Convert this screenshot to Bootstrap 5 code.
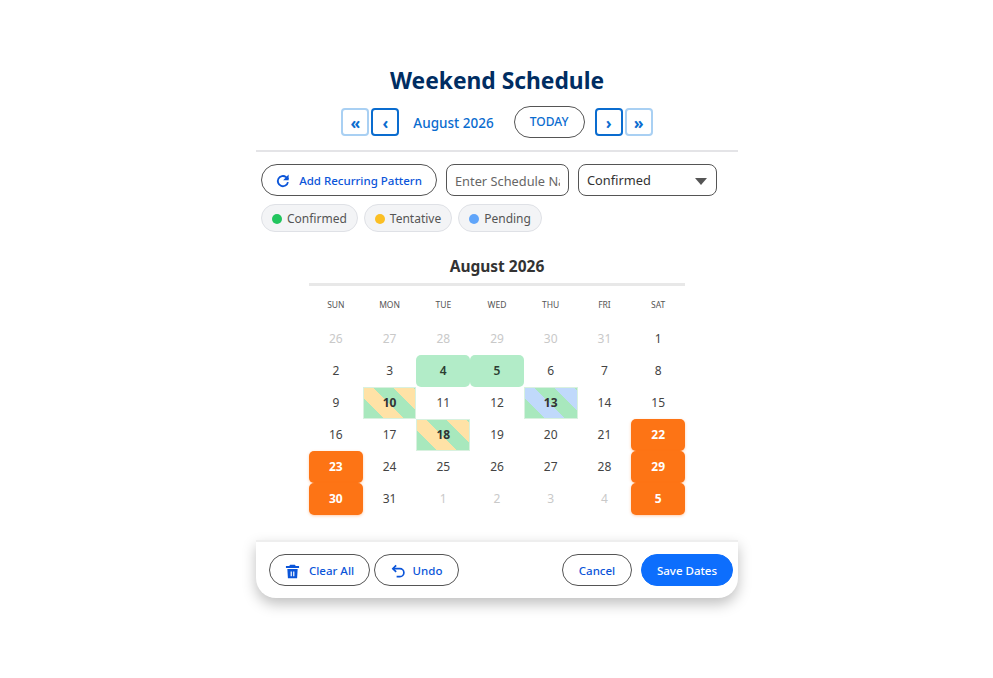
<!DOCTYPE html>
<html lang="en"><head><meta charset="utf-8"><title>Weekend Schedule</title>
<link href="https://cdn.jsdelivr.net/npm/bootstrap@5.3.0/dist/css/bootstrap.min.css" rel="stylesheet">
<style>
body{font-family:"Noto Sans","Open Sans",sans-serif;background:#fff;margin:0;min-height:678px}
.sched-wrap{width:482px;margin:0 0 0 256px;padding-top:64px}
.sched-title{font-size:22.8px;font-weight:700;color:#002d62;line-height:34px;margin:0 0 6px;text-align:center}
.nav-row{height:36px}
.sq-btn{width:28px;height:28px;padding:1px 0 0;border:2px solid #0a6ccf;border-radius:4px;background:#fff;color:#0a6ccf;font-weight:700;font-size:16px;line-height:20px;display:flex;align-items:center;justify-content:center}
.sq-btn.faint{border-color:#a9d0f3}
.gap-l{margin-left:2px}
.month-lbl{color:#0a6ccf;font-size:13.5px;font-weight:500;margin:0 20px 0 14px;padding-top:2px}
.pill-btn{border:1px solid #555;border-radius:17px;background:#fff;color:#0b55d9;font-size:11.5px;font-weight:500;height:32px;padding:1px 16px 0;display:inline-flex;align-items:center;white-space:nowrap}
.today-btn{color:#0a6ccf;margin-right:10px;width:71px;justify-content:center;padding:0;font-size:12px;font-weight:500}
.rule{height:2px;background:#e4e4e7;margin-top:10px}
.tools{margin:12px 0 0 5px;gap:9px}
.rec-btn{width:176px;justify-content:center;gap:9px;padding:1px 0 0}
.name-in{width:123px;height:32px;border:1px solid #555;border-radius:8px;padding:1px 8px 0;font-size:12.8px;color:#555;background:#fff;outline:0;font-family:inherit}
.name-in::placeholder{color:#666;opacity:1}
.kind-sel{width:139px;height:32px;border:1px solid #555;border-radius:8px;padding:2px 8px 0;font-size:12.8px;color:#333;background:#fff;position:relative;display:flex;align-items:center}
.kind-sel::after{content:"";position:absolute;right:9px;top:13px;border-left:6px solid transparent;border-right:6px solid transparent;border-top:7px solid #555}
.chips{margin:8px 0 0 5px;gap:6px}
.chip-item{height:28px;border:1px solid #dfe1e6;border-radius:14px;background:#f3f4f6;color:#555;font-size:12px;display:inline-flex;align-items:center;gap:5px;padding:1px 10px 0}
.dot-mark{width:10px;height:10px;border-radius:50%}
.cal-box{width:376px;margin:23px 0 0 53px}
.cal-title{font-size:15.5px;font-weight:700;color:#333;text-align:center;line-height:22px;padding-bottom:6px;border-bottom:3px solid #e8e8e8}
.cal-grid{display:grid;grid-template-columns:repeat(7,1fr);grid-auto-rows:32px;text-align:center;font-size:12px;color:#444}
.dow{font-size:8.5px;color:#555;height:37px;line-height:37px;text-transform:uppercase}
.hdr-grid{grid-auto-rows:37px}
.day-cell{display:flex;align-items:center;justify-content:center;height:32px}
.muted-day{color:#c9c9c9}
.ok-day{background:#b2ecc8;border-radius:5px;font-weight:600;color:#2c3e33}
.mix-a,.mix-b{font-weight:700;color:#333;border:1px solid #d8f1df}
.mix-a{background:repeating-linear-gradient(45deg,#a8e8bd 0 14px,#ffe2a6 14px 28px)}
.mix-b{background:repeating-linear-gradient(45deg,#a8e8bd 0 14px,#c0d9fb 14px 28px)}
.wk-day{background:#fd7415;color:#fff;font-weight:700;border-radius:5px;box-shadow:0 1px 3px rgba(253,116,21,.35)}
.foot-bar{margin-top:25px;height:58px;border-top:2px solid #eee;border-radius:0 0 20px 20px;box-shadow:0 6px 14px rgba(0,0,0,.25);background:#fff;padding:12px 5px 0 13px;display:flex;align-items:flex-start}
.foot-bar .pill-btn{gap:9px;justify-content:center;padding:2px 0 0}
.foot-bar .wd-85{gap:7px}
.save-btn{background:#0d6efd;border-color:#0d6efd!important;color:#fff!important}
.wd-101{width:101px}.wd-85{width:85px;margin-left:4px}.wd-70{width:70px}.wd-92{width:92px;margin-left:9px}
</style></head><body>
<main class="sched-wrap">
<h1 class="sched-title">Weekend Schedule</h1>
<div class="d-flex justify-content-center align-items-center nav-row">
<button class="sq-btn faint">«</button>
<button class="sq-btn gap-l">‹</button>
<span class="month-lbl">August 2026</span>
<button class="pill-btn today-btn">TODAY</button>
<button class="sq-btn">›</button>
<button class="sq-btn faint gap-l">»</button>
</div>
<div class="rule"></div>
<div class="d-flex tools">
<button class="pill-btn rec-btn"><svg width="14" height="14" viewBox="0 0 16 16" fill="none" stroke="#0b55d9" stroke-width="2.1"><path d="M13.6 9.2A5.8 5.8 0 1 1 11.5 3.6L14 6"/><path d="M14.4 .5V7H8.2" stroke="none" fill="#0b55d9"/></svg>Add Recurring Pattern</button>
<input class="name-in" placeholder="Enter Schedule Name">
<div class="kind-sel">Confirmed</div>
</div>
<div class="d-flex chips">
<span class="chip-item"><i class="dot-mark" style="background:#22c55e"></i>Confirmed</span>
<span class="chip-item"><i class="dot-mark" style="background:#fbbf24"></i>Tentative</span>
<span class="chip-item"><i class="dot-mark" style="background:#60a5fa"></i>Pending</span>
</div>
<section class="cal-box">
<div class="cal-title">August 2026</div>
<div class="cal-grid hdr-grid"><div class="dow">Sun</div><div class="dow">Mon</div><div class="dow">Tue</div><div class="dow">Wed</div><div class="dow">Thu</div><div class="dow">Fri</div><div class="dow">Sat</div></div>
<div class="cal-grid">
<div class="day-cell muted-day">26</div><div class="day-cell muted-day">27</div><div class="day-cell muted-day">28</div><div class="day-cell muted-day">29</div><div class="day-cell muted-day">30</div><div class="day-cell muted-day">31</div><div class="day-cell">1</div>
<div class="day-cell">2</div><div class="day-cell">3</div><div class="day-cell ok-day">4</div><div class="day-cell ok-day">5</div><div class="day-cell">6</div><div class="day-cell">7</div><div class="day-cell">8</div>
<div class="day-cell">9</div><div class="day-cell mix-a">10</div><div class="day-cell">11</div><div class="day-cell">12</div><div class="day-cell mix-b">13</div><div class="day-cell">14</div><div class="day-cell">15</div>
<div class="day-cell">16</div><div class="day-cell">17</div><div class="day-cell mix-a">18</div><div class="day-cell">19</div><div class="day-cell">20</div><div class="day-cell">21</div><div class="day-cell wk-day">22</div>
<div class="day-cell wk-day">23</div><div class="day-cell">24</div><div class="day-cell">25</div><div class="day-cell">26</div><div class="day-cell">27</div><div class="day-cell">28</div><div class="day-cell wk-day">29</div>
<div class="day-cell wk-day">30</div><div class="day-cell">31</div><div class="day-cell muted-day">1</div><div class="day-cell muted-day">2</div><div class="day-cell muted-day">3</div><div class="day-cell muted-day">4</div><div class="day-cell wk-day">5</div>
</div>
</section>
<footer class="foot-bar">
<button class="pill-btn wd-101"><svg width="15" height="15" viewBox="0 0 16 16" fill="#0b55d9"><path d="M5.5 .8h5l1 1.4H15v2H1v-2h3.500zM2.500 5.200h11l-.6 10H3.100zM6 8v5h1.300V8zm2.700 0v5H10V8z" fill-rule="evenodd"/></svg>Clear All</button>
<button class="pill-btn wd-85"><svg width="15" height="15" viewBox="0 0 16 16" fill="none" stroke="#0b55d9" stroke-width="1.8"><path d="M5.500 1.500 2 5l3.500 3.500"/><path d="M2 5h7.500a4.200 4.200 0 0 1 0 8.500H6"/></svg>Undo</button>
<button class="pill-btn ms-auto wd-70">Cancel</button>
<button class="pill-btn save-btn wd-92">Save Dates</button>
</footer>
</main>
</body></html>
